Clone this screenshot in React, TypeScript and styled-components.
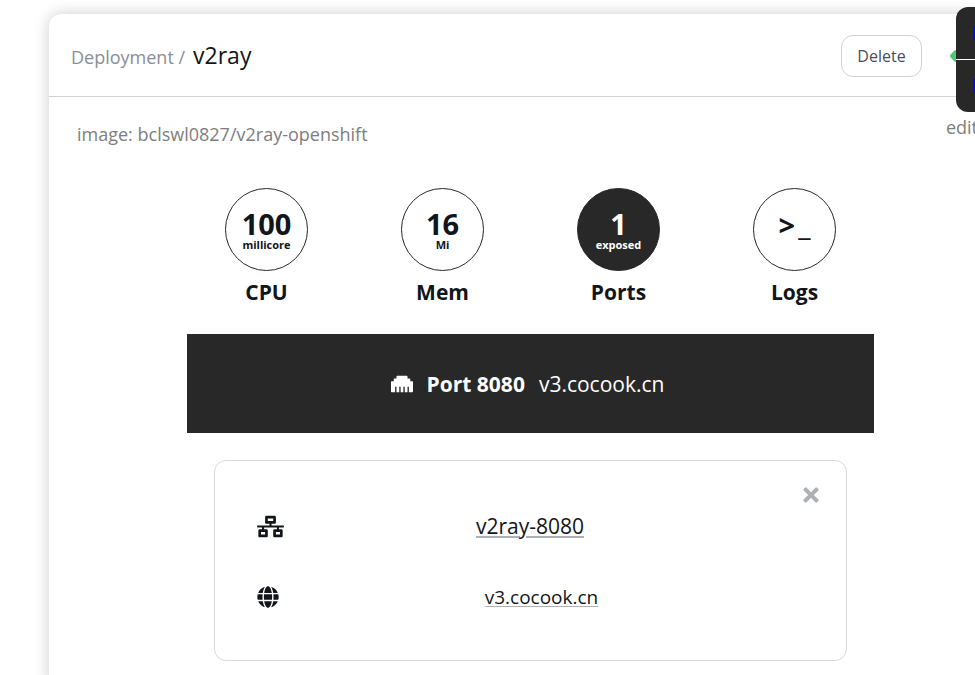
import React from "react";
import styled, { createGlobalStyle } from "styled-components";
import { FaEthernet, FaGlobe, FaNetworkWired, FaTimes } from "react-icons/fa";

const ink = "#121519";
const dark = "#282828";
const line = "#d0d2d6";

const GlobalStyle = createGlobalStyle`
  * { box-sizing: border-box; }
  body {
    margin: 0;
    overflow: hidden;
    background: #fff;
    color: ${ink};
    font-family: "Open Sans", "Noto Sans", sans-serif;
    font-size: 18px;
    line-height: 24px;
  }
  button { font-family: inherit; color: inherit; cursor: pointer; }
`;

const Card = styled.main`
  margin: 14px -37px 0 49px;
  min-height: 100vh;
  border-radius: 12px;
  background: #fff;
  box-shadow: 0 0 16px rgba(0, 0, 0, 0.2);
`;

const Header = styled.header`
  display: flex;
  align-items: center;
  height: 83px;
  padding: 2px 37px 0 22px;
  border-bottom: 1px solid ${line};
`;

const Title = styled.h1`
  display: flex;
  align-items: baseline;
  gap: 8px;
  flex: 1;
  margin: 0;
  font-size: 23px;
  font-weight: 400;
  line-height: 32px;
`;

const Kind = styled.span`
  color: #8b8e93;
  font-size: 18px;
`;

const DeleteButton = styled.button`
  width: 81px;
  height: 42px;
  padding: 0;
  border: 1px solid ${line};
  border-radius: 12px;
  background: #fff;
  color: #495057;
  font-size: 16px;
`;

const Status = styled.svg`
  width: 12px;
  height: 12px;
  margin: 0 13px 0 28px;
`;

const ImageRow = styled.div`
  display: flex;
  justify-content: space-between;
  padding: 25px 34px 0 28px;
  color: #7e7e7e;
`;

const EditButton = styled.button`
  height: 24px;
  margin-top: -7px;
  padding: 0;
  border: 0;
  background: none;
  color: #7e7e7e;
  font-size: 18px;
  line-height: 24px;
`;

const Metrics = styled.div`
  display: flex;
  justify-content: center;
  gap: 76px;
  margin-top: 42px;
`;

const Metric = styled.button`
  display: flex;
  flex-direction: column;
  align-items: center;
  gap: 6px;
  width: 100px;
  padding: 0;
  border: 0;
  background: none;
  font-size: 21px;
  font-weight: 700;
  line-height: 30px;
`;

const Circle = styled.span<{ $active?: boolean }>`
  display: flex;
  flex-direction: column;
  align-items: center;
  width: 83px;
  height: 83px;
  padding-top: 20px;
  border: 1px solid ${dark};
  border-radius: 50%;
  background: ${(p) => (p.$active ? dark : "#fff")};
  color: ${(p) => (p.$active ? "#fff" : ink)};
`;

const Value = styled.span`
  font-size: 29px;
  line-height: 30px;
`;

const Unit = styled.span`
  font-size: 11px;
  line-height: 12px;
`;

const Prompt = styled.span`
  display: flex;
  gap: 3px;
  font-size: 29px;
  font-weight: 700;
  line-height: 32px;
`;

const Underscore = styled.span`
  font-weight: 600;
`;

const PortBar = styled.section`
  display: flex;
  align-items: center;
  justify-content: center;
  gap: 14px;
  height: 99px;
  margin: 27px 138px 0;
  padding-right: 6px;
  background: ${dark};
  color: #fff;
  font-size: 21px;
`;

const PortName = styled.strong`
  font-size: 21px;
`;

const Service = styled.section`
  position: relative;
  display: grid;
  gap: 39px;
  margin: 27px 165px 0;
  padding: 49px 42px 47px;
  border: 1px solid #d9d9d9;
  border-radius: 12px;
`;

const ServiceRow = styled.div<{ $balanced?: boolean }>`
  display: flex;
  align-items: center;
  height: 32px;
  padding-right: ${(p) => (p.$balanced ? 28 : 0)}px;
`;

const Center = styled.div`
  flex: 1;
  text-align: center;
`;

const ServiceLink = styled.a<{ $large?: boolean }>`
  color: ${ink};
  font-size: ${(p) => (p.$large ? 21 : 19)}px;
  text-decoration: underline;
  text-decoration-color: #adb1b5;
  text-decoration-thickness: ${(p) => (p.$large ? 2 : 1)}px;
  text-underline-offset: 2px;
`;

const CloseButton = styled.button`
  position: absolute;
  top: 23px;
  right: 24px;
  display: flex;
  padding: 0;
  border: 0;
  background: none;
  color: #adb1b5;
`;

const Menu = styled.nav`
  position: fixed;
  top: 7px;
  right: -81px;
  width: 100px;
  border-radius: 12px;
  background: ${dark};
  overflow: hidden;
`;

const MenuLink = styled.a`
  display: block;
  height: 52px;
  padding: 14px 16px;
  color: #0000ee;
  font-size: 20px;
  text-decoration: none;

  & + & {
    height: 53px;
    border-top: 1px solid #fff;
  }
`;

const metrics = [
  { label: "CPU", value: "100", unit: "millicore" },
  { label: "Mem", value: "16", unit: "Mi" },
  { label: "Ports", value: "1", unit: "exposed", active: true },
];

export default function App() {
  return (
    <>
      <GlobalStyle />
      <Card>
        <Header>
          <Title>
            <Kind>Deployment /</Kind>
            v2ray
          </Title>
          <DeleteButton type="button">Delete</DeleteButton>
          <Status viewBox="0 0 12 12" aria-hidden="true">
            <path d="M1 4Q-1 6 1 8L4 11Q6 13 8 11L11 8Q13 6 11 4L8 1Q6 -1 4 1Z" fill="#50c878" />
          </Status>
        </Header>
        <ImageRow>
          <span>image: bclswl0827/v2ray-openshift</span>
          <EditButton type="button">edit</EditButton>
        </ImageRow>
        <Metrics>
          {metrics.map((m) => (
            <Metric type="button" key={m.label}>
              <Circle $active={m.active}>
                <Value>{m.value}</Value>
                <Unit>{m.unit}</Unit>
              </Circle>
              {m.label}
            </Metric>
          ))}
          <Metric type="button">
            <Circle>
              <Prompt>
                <span>&gt;</span>
                <Underscore>_</Underscore>
              </Prompt>
            </Circle>
            Logs
          </Metric>
        </Metrics>
        <PortBar>
          <FaEthernet size={22} />
          <PortName>Port 8080</PortName>
          <span>v3.cocook.cn</span>
        </PortBar>
        <Service>
          <CloseButton type="button" aria-label="Close">
            <FaTimes size={22} />
          </CloseButton>
          <ServiceRow $balanced>
            <FaNetworkWired size={27} />
            <Center>
              <ServiceLink $large href="#service">v2ray-8080</ServiceLink>
            </Center>
          </ServiceRow>
          <ServiceRow>
            <FaGlobe size={22} />
            <Center>
              <ServiceLink href="#host">v3.cocook.cn</ServiceLink>
            </Center>
          </ServiceRow>
        </Service>
      </Card>
      <Menu>
        <MenuLink href="#edit">Edit</MenuLink>
        <MenuLink href="#logs">Logs</MenuLink>
      </Menu>
    </>
  );
}
